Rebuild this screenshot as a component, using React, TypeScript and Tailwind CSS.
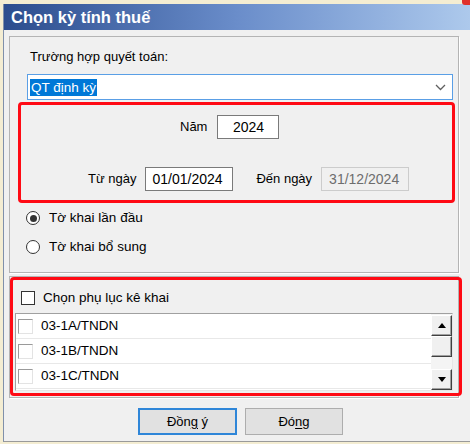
import React from "react";

const FONT = { fontFamily: "'Liberation Sans', Arial, sans-serif" };

const ROWS = ["03-1A/TNDN", "03-1B/TNDN", "03-1C/TNDN"];

function Radio({ checked, label }: { checked?: boolean; label: string }) {
  return (
    <div className="flex items-center h-[18px] ml-[16px]">
      <div className="w-[14px] h-[14px] rounded-full border border-[#333] bg-white flex items-center justify-center">
        {checked && <div className="w-[7px] h-[7px] rounded-full bg-[#333]" />}
      </div>
      <span className="ml-[9px] text-[13.5px] leading-[16px] text-black">{label}</span>
    </div>
  );
}

function ScrollButton({ dir }: { dir: "up" | "down" }) {
  return (
    <div className="w-[21px] h-[21px] bg-[#f0f0f0] border-t border-l border-t-white border-l-white border-b border-r border-b-[#404040] border-r-[#404040] shadow-[inset_-1px_-1px_0_#a0a0a0] flex items-center justify-center">
      <svg width="8" height="5" viewBox="0 0 8 5">
        {dir === "up" ? <path d="M0 5 L4 0 L8 5 Z" fill="#000" /> : <path d="M0 0 L4 5 L8 0 Z" fill="#000" />}
      </svg>
    </div>
  );
}

export default function App() {
  return (
    <div className="relative w-[470px] h-[444px] overflow-hidden bg-[#f4edd2] pt-[4px] pl-[3px]" style={FONT}>
      {/* bit of window behind */}
      <div className="absolute right-0 top-0 w-[8px] h-[5px] rounded-bl-[3px] bg-[#e0302a]" />

      <div className="flex flex-col w-[467px] h-[438px] border-l border-l-[#8090aa] border-b border-b-[#9a9a9a] bg-[#f0f0f0]">
        {/* title bar */}
        <div className="h-[26px] shrink-0 flex items-center pl-[7px] bg-linear-to-r from-[#2c4d8e] via-[#6a8dca] to-[#adc9ec] text-white font-bold text-[16.5px]">
          Chọn kỳ tính thuế
        </div>

        {/* group 1 */}
        <div className="ml-[5px] mt-[6px] w-[450px] h-[237px] shrink-0 border border-[#b4b4b4] shadow-[1px_1px_0_#fff]">
          <div className="mt-[12px] ml-[20px] text-[13px] leading-[16px] text-black">Trường hợp quyết toán:</div>

          <div className="mt-[9px] ml-[17px] w-[426px] h-[26px] border border-[#5a9fe6] bg-white flex items-center">
            <span className="ml-[2px] bg-[#0078d7] text-white text-[13.5px] leading-[17px] px-[1px]">QT định kỳ</span>
            <svg className="ml-auto mr-[6px]" width="11" height="7" viewBox="0 0 11 7">
              <path d="M1 1 L5.5 5.5 L10 1" fill="none" stroke="#606060" strokeWidth="1.3" />
            </svg>
          </div>

          <div className="mt-[2px] ml-[8px] w-[437px] h-[101px] border-[3px] border-[#ff0a14] rounded-[4px]">
            <div className="mt-[10px] flex items-center h-[24px]">
              <span className="ml-[159px] text-[13px] text-black">Năm</span>
              <div className="ml-[10px] w-[62px] h-[24px] border border-[#7a7a7a] bg-white flex items-center justify-center text-[14px] text-black">
                2024
              </div>
            </div>
            <div className="mt-[28px] flex items-center h-[24px]">
              <span className="ml-[67px] text-[13px] text-black">Từ ngày</span>
              <div className="ml-[9px] w-[88px] h-[24px] border border-[#7a7a7a] bg-white flex items-center pl-[6px] text-[14px] text-black">
                01/01/2024
              </div>
              <span className="ml-[23px] text-[13px] text-black">Đến ngày</span>
              <div className="ml-[9px] w-[88px] h-[24px] border border-[#cccccc] bg-[#f0f0f0] flex items-center pl-[7px] text-[14px] text-[#6d6d6d]">
                31/12/2024
              </div>
            </div>
          </div>

          <div className="mt-[6px]">
            <Radio checked label="Tờ khai lần đầu" />
          </div>
          <div className="mt-[11px]">
            <Radio label="Tờ khai bổ sung" />
          </div>
        </div>

        {/* group 2 */}
        <div className="ml-[5px] mt-[3px] w-[450px] h-[122px] shrink-0 border border-[#b4b4b4] shadow-[1px_1px_0_#fff]">
          <div className="w-[452px] h-[119px] border-[3px] border-[#ff0a14] rounded-[4px]">
            <div className="mt-[10px] ml-[8px] flex items-center h-[15px]">
              <div className="w-[14px] h-[14px] border border-[#333] bg-white" />
              <span className="ml-[8px] text-[13.5px] leading-[16px] text-black">Chọn phụ lục kê khai</span>
            </div>

            <div className="mt-[8px] ml-[2px] w-[438px] h-[78px] flex border-t border-l border-t-[#a0a0a0] border-l-[#a0a0a0] border-b border-r border-b-[#e6e6e6] border-r-[#e6e6e6] bg-white">
              <div className="flex-1 flex flex-col">
                {ROWS.map((r) => (
                  <div key={r} className="h-[25px] shrink-0 flex items-center border-b border-[#e8e8e8]">
                    <div className="ml-[2px] w-[15px] h-[15px] bg-white border-t border-l border-t-[#9a9a9a] border-l-[#9a9a9a] border-b border-r border-b-[#e3e3e3] border-r-[#e3e3e3]" />
                    <span className="ml-[8px] text-[13.5px] leading-[16px] text-black">{r}</span>
                  </div>
                ))}
              </div>
              <div className="w-[21px] flex flex-col pt-[1px] bg-[#f4f4f4]">
                <ScrollButton dir="up" />
                <div className="w-[21px] h-[21px] bg-[#f0f0f0] border-t border-l border-t-white border-l-white border-b border-r border-b-[#404040] border-r-[#404040] shadow-[inset_-1px_-1px_0_#a0a0a0]" />
                <div className="flex-1" />
                <ScrollButton dir="down" />
              </div>
            </div>
          </div>
        </div>

        {/* buttons */}
        <div className="mt-[10px] ml-[134px] flex gap-[8px]">
          <button className="w-[99px] h-[27px] bg-[#e1e1e1] border-2 border-[#2f86d8] text-[13px] text-black">
            Đồn<span className="underline underline-offset-2">g</span> ý
          </button>
          <button className="w-[98px] h-[27px] bg-[#e1e1e1] border border-[#adadad] text-[13px] text-black">
            Đó<span className="underline underline-offset-2">n</span>g
          </button>
        </div>
      </div>
    </div>
  );
}
